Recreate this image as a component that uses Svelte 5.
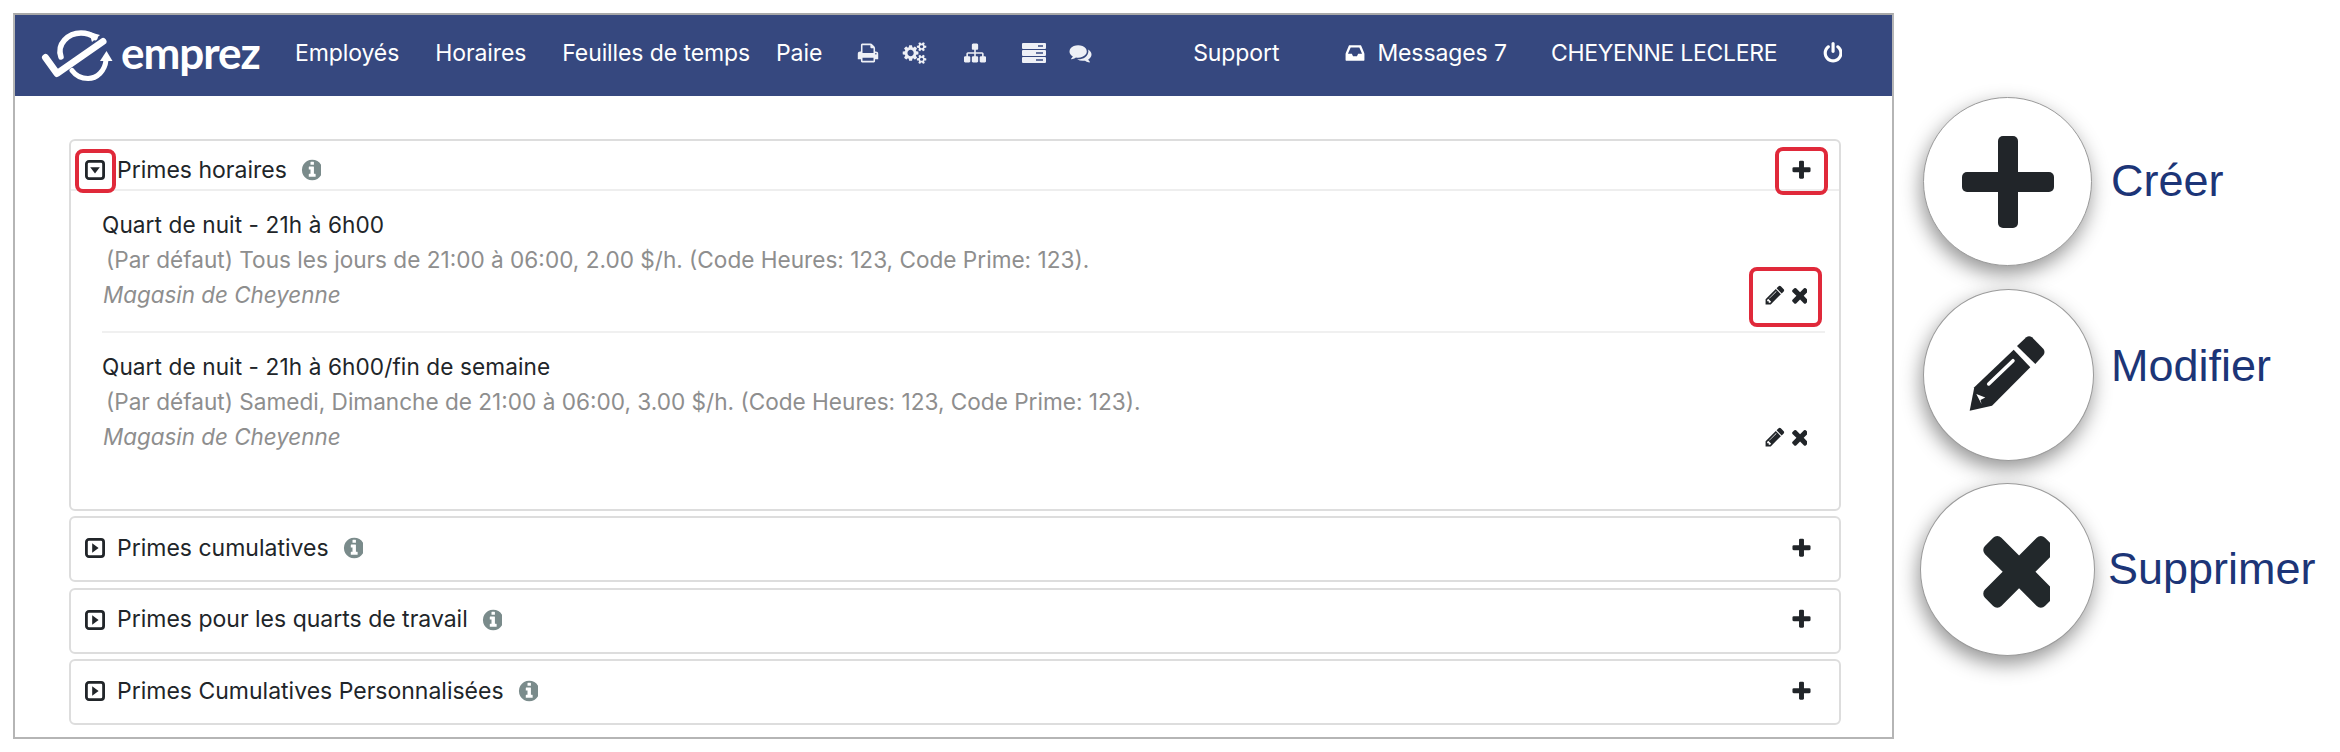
<script>
  const P = {
    plus: 'M1600 736v192q0 40-28 68t-68 28h-416v416q0 40-28 68t-68 28h-192q-40 0-68-28t-28-68v-416h-416q-40 0-68-28t-28-68v-192q0-40 28-68t68-28h416v-416q0-40 28-68t68-28h192q40 0 68 28t28 68v416h416q40 0 68 28t28 68z',
    times: 'M1490 1322q0 40-28 68l-136 136q-28 28-68 28t-68-28l-294-294-294 294q-28 28-68 28t-68-28l-136-136q-28-28-28-68t28-68l294-294-294-294q-28-28-28-68t28-68l136-136q28-28 68-28t68 28l294 294 294-294q28-28 68-28t68 28l136 136q28 28 28 68t-28 68l-294 294 294 294q28 28 28 68z',
    pencil: 'M491 1536l91-91-235-235-91 91v107h128v128h107zm523-928q0-22-22-22-10 0-17 7l-542 542q-7 7-7 17 0 22 22 22 10 0 17-7l542-542q7-7 7-17zm-54-192l416 416-832 832h-416v-416zm683 96q0 53-37 90l-166 166-416-416 166-165q36-38 90-38 53 0 91 38l235 234q37 39 37 91z',
    info: 'M1152 1376v-160q0-14-9-23t-23-9h-96v-512q0-14-9-23t-23-9h-320q-14 0-23 9t-9 23v160q0 14 9 23t23 9h96v320h-96q-14 0-23 9t-9 23v160q0 14 9 23t23 9h448q14 0 23-9t9-23zm-128-896v-160q0-14-9-23t-23-9h-192q-14 0-23 9t-9 23v160q0 14 9 23t23 9h192q14 0 23-9t9-23zm640 416q0 209-103 385.5t-279.5 279.5-385.5 103-385.5-103-279.5-279.5-103-385.5 103-385.5 279.5-279.5 385.5-103 385.5 103 279.5 279.5 103 385.5z',
    power: 'M1664 896q0 156-61 298t-164 245-245 164-298 61-298-61-245-164-164-245-61-298q0-182 80.5-343t226.5-270q43-32 95.5-25t83.5 50q32 42 24.5 94.5t-49.5 84.5q-98 74-151.5 181t-53.5 228q0 104 40.5 198.5t109.5 163.5 163.5 109.5 198.5 40.5 198.5-40.5 163.5-109.5 109.5-163.5 40.5-198.5q0-121-53.5-228t-151.5-181q-42-32-49.5-84.5t24.5-94.5q31-43 84-50t95 25q146 109 226.5 270t80.5 343zm-640-768v640q0 52-38 90t-90 38-90-38-38-90v-640q0-52 38-90t90-38 90 38 38 90z',
    print: 'M448 1536h896v-256h-896v256zm0-640h896v-384h-160q-40 0-68-28t-28-68v-160h-640v640zm1152 64q0-26-19-45t-45-19-45 19-19 45 19 45 45 19 45-19 19-45zm128 0v416q0 13-9.5 22.5t-22.5 9.5h-224v160q0 40-28 68t-68 28h-960q-40 0-68-28t-28-68v-160h-224q-13 0-22.5-9.5t-9.5-22.5v-416q0-79 56.5-135.5t135.5-56.5h64v-544q0-40 28-68t68-28h672q40 0 88 20t76 48l152 152q28 28 48 76t20 88v256h64q79 0 135.5 56.5t56.5 135.5z',
    comments: 'M1408 768q0 139-94 257t-256.5 186.5-353.5 68.5q-86 0-176-16-124 88-278 128-36 9-86 16h-3q-11 0-20.5-8t-11.5-21q-1-3-1-6.5t.5-6.5 2-6l2.5-5 3.5-5.5 4-5 4.5-5 4-4.5q5-6 23-25t26-29.5 22.5-29 25-38.5 20.5-44q-124-72-195-177t-71-224q0-139 94-257t256.5-186.5 353.5-68.5 353.5 68.5 256.5 186.5 94 257zm384 256q0 120-71 224.5t-195 176.5q10 24 20.5 44t25 38.5 22.5 29 26 29.5 23 25q1 1 4 4.5t4.5 5 4 5 3.5 5.5l2.5 5 2 6 .5 6.5-1 6.5q-3 14-13 22t-22 7q-50-7-86-16-154-40-278-128-90 16-176 16-271 0-472-132 58 4 88 4 161 0 309-45t264-129q125-92 192-212t67-254q0-77-23-152 129 71 204 178t75 230z',
    inbox: 'M1023 960h316q-1-3-2.5-8.5t-2.5-7.5l-212-496h-708l-212 496q-1 3-2.5 8.5t-2.5 7.5h316l95 192h320zm513 30v482q0 26-19 45t-45 19h-1408q-26 0-45-19t-19-45v-482q0-62 25-123l238-552q10-25 36.5-42t52.5-17h832q26 0 52.5 17t36.5 42l238 552q25 61 25 123z',
    sitemap: 'M1792 1248v320q0 40-28 68t-68 28h-320q-40 0-68-28t-28-68v-320q0-40 28-68t68-28h96v-192h-512v192h96q40 0 68 28t28 68v320q0 40-28 68t-68 28h-320q-40 0-68-28t-28-68v-320q0-40 28-68t68-28h96v-192h-512v192h96q40 0 68 28t28 68v320q0 40-28 68t-68 28h-320q-40 0-68-28t-28-68v-320q0-40 28-68t68-28h96v-192q0-52 38-90t90-38h512v-192h-96q-40 0-68-28t-28-68v-320q0-40 28-68t68-28h320q40 0 68 28t28 68v320q0 40-28 68t-68 28h-96v192h512q52 0 90 38t38 90v192h96q40 0 68 28t28 68z',
    cogs: 'M896 896q0-106-75-181t-181-75-181 75-75 181 75 181 181 75 181-75 75-181zm768 512q0-52-38-90t-90-38-90 38-38 90q0 53 37.5 90.5t90.5 37.5 90.5-37.5 37.5-90.5zm0-1024q0-52-38-90t-90-38-90 38-38 90q0 53 37.5 90.5t90.5 37.5 90.5-37.5 37.5-90.5zm-384 421v185q0 10-7 19.5t-16 10.5l-155 24q-11 35-32 76 34 48 90 115 7 11 7 20 0 12-7 19-23 30-82.5 89.5t-78.5 59.5q-11 0-21-7l-115-90q-37 19-77 31-11 108-23 155-7 24-30 24h-186q-11 0-20-7.5t-10-17.5l-23-153q-34-10-75-31l-118 89q-7 7-20 7-11 0-21-8-144-133-144-160 0-9 7-19 10-14 41-53t47-61q-23-44-35-82l-152-24q-10-1-17-9.5t-7-19.5v-185q0-10 7-19.5t16-10.5l155-24q11-35 32-76-34-48-90-115-7-11-7-20 0-12 7-20 22-30 82-89t79-59q11 0 21 7l115 90q34-18 77-32 11-108 23-154 7-24 30-24h186q11 0 20 7.5t10 17.5l23 153q34 10 75 31l118-89q8-7 20-7 11 0 21 8 144 133 144 160 0 8-7 19-12 16-42 54t-45 60q23 48 34 82l152 23q10 2 17 10.5t7 19.5zm640 533v140q0 16-149 31-12 27-30 52 51 113 51 138 0 4-4 7-122 71-124 71-8 0-46-47t-52-68q-20 2-30 2t-30-2q-14 21-52 68t-46 47q-2 0-124-71-4-3-4-7 0-25 51-138-18-25-30-52-149-15-149-31v-140q0-16 149-31 13-29 30-52-51-113-51-138 0-4 4-7 4-2 35-20t59-34 30-16q8 0 46 46.5t52 67.5q20-2 30-2t30 2q51-71 92-112l6-2q4 0 124 70 4 3 4 7 0 25-51 138 17 23 30 52 149 15 149 31zm0-1024v140q0 16-149 31-12 27-30 52 51 113 51 138 0 4-4 7-122 71-124 71-8 0-46-47t-52-68q-20 2-30 2t-30-2q-14 21-52 68t-46 47q-2 0-124-71-4-3-4-7 0-25 51-138-18-25-30-52-149-15-149-31v-140q0-16 149-31 13-29 30-52-51-113-51-138 0-4 4-7 4-2 35-20t59-34 30-16q8 0 46 46.5t52 67.5q20-2 30-2t30 2q51-71 92-112l6-2q4 0 124 70 4 3 4 7 0 25-51 138 17 23 30 52 149 15 149 31z'
  };
  const items = [
    { title: 'Quart de nuit - 21h à 6h00', sub: '(Par défaut) Tous les jours de 21:00 à 06:00, 2.00 $/h. (Code Heures: 123, Code Prime: 123).' },
    { title: 'Quart de nuit - 21h à 6h00/fin de semaine', sub: '(Par défaut) Samedi, Dimanche de 21:00 à 06:00, 3.00 $/h. (Code Heures: 123, Code Prime: 123).' }
  ];
  const collapsed = ['Primes cumulatives', 'Primes pour les quarts de travail', 'Primes Cumulatives Personnalisées'];
</script>

{#snippet fa(d, cls, w = 1792)}
  <svg class={cls} viewBox="0 0 {w} 1792" aria-hidden="true"><path {d} /></svg>
{/snippet}

{#snippet caretBox(down)}
  <svg class="caret" viewBox="0 0 20 20" aria-hidden="true">
    <rect x="1.4" y="1.4" width="17.2" height="17.2" rx="2.6" fill="none" stroke="#212529" stroke-width="2.8" />
    {#if down}
      <path d="M5.2 7.2h9.6l-4.8 6.4z" fill="#212529" />
    {:else}
      <path d="M7.2 5.2v9.6l6.4-4.8z" fill="#212529" />
    {/if}
  </svg>
{/snippet}

<div class="page">
  <main class="frame">
    <nav class="nav">
      <div class="brand">
        <svg class="logo" viewBox="0 0 72 54" aria-hidden="true">
          <g fill="none" stroke="#fff" stroke-linecap="round" stroke-linejoin="round">
            <path d="M4.5 28.5 L16 44.5 L62 12.5" stroke-width="7" />
            <path d="M20 28 C15.500 15 27 4 40 4 C46 4 50 5.500 54 8.500" stroke-width="5.500" />
            <path d="M31 41.500 C35 47 41 49.500 47 49.500 C56 49.500 64 42 65 31" stroke-width="5" />
          </g>
          <path d="M65.500 22 L71.500 32 L59 32z" fill="#fff" />
          <path d="M48 3 L59 6 L51 13z" fill="#fff" />
        </svg>
        <span class="word">emprez</span>
      </div>
      <a class="link l-emp">Employés</a>
      <a class="link l-hor">Horaires</a>
      <a class="link l-feu">Feuilles de temps</a>
      <a class="link l-pai">Paie</a>
      <div class="tools">
        {@render fa(P.print, 'ti')}
        {@render fa(P.cogs, 'ti cog', 1920)}
        {@render fa(P.sitemap, 'ti map')}
        <svg class="ti srv" viewBox="0 0 24 20" aria-hidden="true">
          <path fill-rule="evenodd" d="M1 0h22a1 1 0 0 1 1 1v4a1 1 0 0 1-1 1H1a1 1 0 0 1-1-1V1a1 1 0 0 1 1-1zm15 2.200v1.600h5V2.200zM1 7h22a1 1 0 0 1 1 1v4a1 1 0 0 1-1 1H1a1 1 0 0 1-1-1V8a1 1 0 0 1 1-1zm13 2.200v1.600h7V9.200zM1 14h22a1 1 0 0 1 1 1v4a1 1 0 0 1-1 1H1a1 1 0 0 1-1-1v-4a1 1 0 0 1 1-1zm13 2.200v1.600h7v-1.600z" />
        </svg>
        {@render fa(P.comments, 'ti chat')}
      </div>
      <a class="link l-sup">Support</a>
      <a class="link l-msg">{@render fa(P.inbox, 'box', 1536)}Messages 7</a>
      <a class="link l-usr">CHEYENNE LECLERE</a>
      {@render fa(P.power, 'pow', 1536)}
    </nav>

    <div class="content">
      <section class="card open">
        <header class="head">
          {@render caretBox(true)}
          <span class="name">Primes horaires</span>
          {@render fa(P.info, 'info', 1536)}
          {@render fa(P.plus, 'add')}
        </header>
        <div class="items">
          {#each items as it}
            <article class="item">
              <div class="txt">
                <div class="title">{it.title}</div>
                <div class="sub">{it.sub}</div>
                <div class="place">Magasin de Cheyenne</div>
              </div>
              <div class="acts">
                {@render fa(P.pencil, 'pen')}
                {@render fa(P.times, 'del', 1408)}
              </div>
            </article>
          {/each}
        </div>
        <span class="mark m-caret"></span>
        <span class="mark m-add"></span>
        <span class="mark m-acts"></span>
      </section>
      {#each collapsed as c}
        <section class="card shut">
          <header class="head bare">
            {@render caretBox(false)}
            <span class="name">{c}</span>
            {@render fa(P.info, 'info', 1536)}
            {@render fa(P.plus, 'add')}
          </header>
        </section>
      {/each}
    </div>
  </main>

  <aside class="legend">
    <div class="row r1">
      <div class="disc">
        <svg class="big-plus" viewBox="0 0 92 92" aria-hidden="true">
          <rect x="36" y="0" width="20" height="92" rx="5" />
          <rect x="0" y="36" width="92" height="20" rx="5" />
        </svg>
      </div>
      <span class="lab">Créer</span>
    </div>
    <div class="row r2">
      <div class="disc">
        <svg class="big-pen" viewBox="0 0 80 80" aria-hidden="true">
          <path d="M46.700 15.700 L63.300 33.300 L25 71.700 L2.700 76.700 L7.300 53.300z" />
          <path d="M50 12 L59.300 3.300 Q62 1 65 3.300 L76.500 15 Q78.500 18 76.500 21 L68.300 30z" />
          <path d="M21.700 50 L46 26.700" stroke="#fff" stroke-width="3.500" stroke-linecap="round" fill="none" />
          <path d="M9.300 60 L18.300 63.500 L13.500 66 L14.500 70z" fill="#fff" />
        </svg>
      </div>
      <span class="lab">Modifier</span>
    </div>
    <div class="row r3">
      <div class="disc d3">{@render fa(P.times, 'big-x', 1408)}</div>
      <span class="lab">Supprimer</span>
    </div>
  </aside>
</div>

<style>
  :global(body) { margin: 0; background: #fff; }
  .page {
    display: flex;
    align-items: flex-start;
    width: 2340px;
    height: 752px;
    box-sizing: border-box;
    padding: 13px 0 0 13px;
    overflow: hidden;
    font-family: Inter, "Open Sans", sans-serif;
    color: #212529;
  }
  .frame {
    width: 1881px;
    height: 726px;
    flex: none;
    box-sizing: border-box;
    border: 2px solid #b5b5b5;
    border-top-color: #a8a8a8;
    background: #fff;
  }
  .nav {
    height: 81px;
    background: #36487f;
    display: flex;
    align-items: center;
    color: #fff;
    padding-bottom: 5px;
    box-sizing: border-box;
  }
  .brand { display: flex; align-items: center; margin-left: 26px; }
  .logo { width: 72px; height: 54px; flex: none; margin-top: 5px; }
  .word {
    font-family: Lato, sans-serif;
    font-size: 44px;
    font-weight: 700;
    letter-spacing: -1px;
    margin-left: 8px;
    margin-top: -2px;
    line-height: 1;
    width: 142px;
  }
  .link { font-size: 23px; letter-spacing: -0.1px; white-space: nowrap; line-height: 1; }
  .l-emp { margin-left: 32px; }
  .l-hor { margin-left: 36px; }
  .l-feu { margin-left: 36px; }
  .l-pai { margin-left: 26px; }
  .tools { display: flex; align-items: center; margin-left: 35px; }
  .ti { width: 22px; height: 22px; fill: #eef0f6; flex: none; }
  .cog { width: 25px; margin-left: 23px; }
  .map { width: 24px; margin-left: 36px; }
  .srv { width: 24px; height: 20px; margin-left: 35px; }
  .chat { width: 23px; margin-left: 23px; }
  .l-sup { margin-left: 101px; }
  .l-msg { margin-left: 65px; display: flex; align-items: center; }
  .box { width: 22px; height: 22px; fill: #fff; margin-right: 11px; }
  .l-usr { margin-left: 44px; letter-spacing: -0.3px; }
  .pow { width: 21px; height: 22px; fill: #fff; margin-left: 44px; }

  .content { padding: 43px 51px 0 54px; display: flex; flex-direction: column; }
  .card {
    position: relative;
    box-sizing: border-box;
    border: 2px solid #dddddd;
    border-radius: 6px;
    background: #fff;
  }
  .open { height: 372px; margin-bottom: 5px; }
  .shut { height: 66px; margin-bottom: 5.5px; }
  .head {
    display: flex;
    align-items: center;
    height: 38px;
    padding: 10px 28px 0 14px;
    border-bottom: 2px solid #eeeeee;
    box-sizing: content-box;
    font-size: 23px;
  }
  .bare { height: 60px; padding-top: 0; padding-bottom: 2px; border-bottom: 0; }
  .caret { width: 20px; height: 20px; flex: none; margin-right: 12px; }
  .name { line-height: 1; white-space: nowrap; }
  .info { width: 21px; height: 24px; fill: #7a8b8b; margin-left: 13px; flex: none; }
  .add { width: 23px; height: 23px; fill: #212529; margin-left: auto; flex: none; margin-right: -2px; }

  .items { padding: 0 14px 0 31px; }
  .item { display: flex; padding: 16px 0 19px; }
  .item + .item { border-top: 2px solid #f0f0f0; }
  .txt { flex: 1; }
  .title, .sub, .place { line-height: 35px; font-size: 22.6px; white-space: nowrap; }
  .title { color: #212529; letter-spacing: 0.1px; }
  .sub { color: #8e8e8e; margin-left: 4px; }
  .place { color: #8e8e8e; font-style: italic; margin-left: 1px; font-size: 22.4px; }
  .acts { display: flex; align-items: center; align-self: flex-end; height: 35px; gap: 2px; padding-right: 18px; }
  .pen { width: 22px; height: 22px; fill: #212529; }
  .del { width: 19px; height: 24px; fill: #212529; }

  .mark {
    position: absolute;
    box-sizing: border-box;
    border: 4px solid #e0293a;
    border-radius: 8px;
    pointer-events: none;
  }
  .m-caret { left: 4px; top: 8px; width: 41px; height: 44px; }
  .m-add { right: 11px; top: 6px; width: 53px; height: 48px; }
  .m-acts { right: 17px; top: 126px; width: 73px; height: 60px; }

  .legend { display: flex; flex-direction: column; margin-left: 29px; padding-top: 84px; flex: none; }
  .row { display: flex; align-items: center; }
  .r2 { margin-top: 23px; }
  .r3 { margin-top: 22px; margin-left: -3px; }
  .disc {
    width: 169px;
    height: 169px;
    flex: none;
    box-sizing: border-box;
    border-radius: 50%;
    background: #fff;
    border: 1px solid #9a9a9a;
    box-shadow: -2px 8px 20px rgba(0, 0, 0, 0.42);
    display: flex;
    align-items: center;
    justify-content: center;
  }
  .r2 .disc { width: 171px; height: 172px; }
  .d3 { width: 175px; height: 173px; }
  .lab {
    font-family: "Liberation Sans", Arial, sans-serif;
    font-size: 45px;
    color: #1c3577;
    margin-left: 19px;
    margin-bottom: 2px;
    line-height: 1;
  }
  .r2 .lab { margin-left: 17px; margin-bottom: 20px; }
  .r3 .lab { margin-left: 13px; margin-bottom: 2px; }
  .big-plus { width: 92px; height: 92px; fill: #212529; }
  .big-pen { width: 80px; height: 80px; fill: #212529; margin: -2px 0 0 -3px; }
  .big-x { width: 85px; height: 108px; fill: #22282b; margin-top: -4px; }
</style>
